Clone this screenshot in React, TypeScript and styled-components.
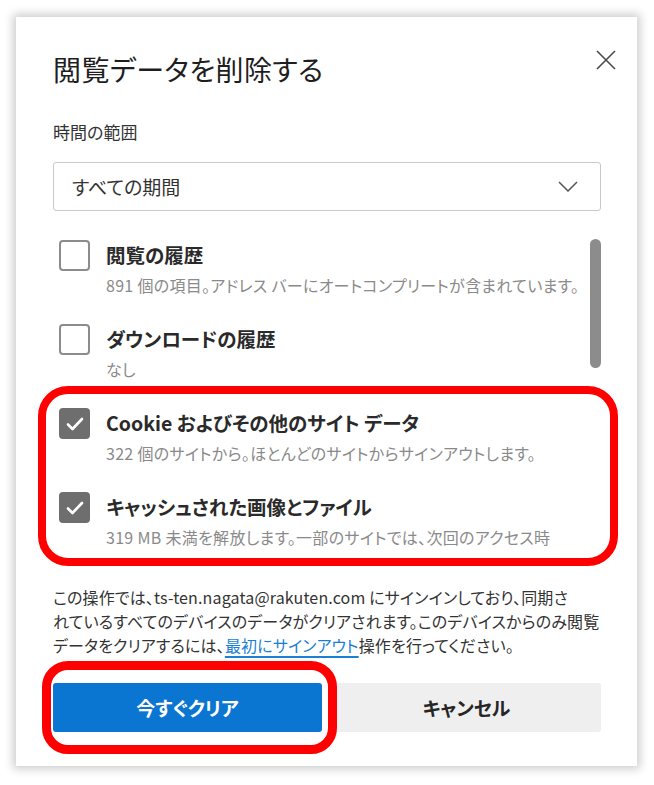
import React from "react";
import styled, { createGlobalStyle } from "styled-components";

const GlobalStyle = createGlobalStyle`
  html, body {
    margin: 0;
    padding: 0;
    background: #ffffff;
  }
  body {
    font-family: "Noto Sans CJK JP", "Noto Sans", sans-serif;
    font-feature-settings: "palt";
    color: #262626;
  }
`;

const Page = styled.div`
  width: 654px;
  height: 785px;
  padding: 17px 17px 19px 16px;
  box-sizing: border-box;
`;

const Card = styled.div`
  position: relative;
  width: 621px;
  height: 749px;
  box-sizing: border-box;
  background: #ffffff;
  box-shadow: 0 0 9px 3px rgba(0, 0, 0, 0.2);
  padding: 32px 36px 0 37px;
  display: flex;
  flex-direction: column;
`;

const Header = styled.div`
  display: flex;
  justify-content: space-between;
  align-items: flex-start;
`;

const Title = styled.h1`
  margin: 0;
  font-size: 28px;
  line-height: 40px;
  font-weight: 400;
  color: #1e1e1e;
  letter-spacing: 0.4px;
`;

const CloseButton = styled.button`
  border: none;
  background: transparent;
  padding: 0;
  width: 24px;
  height: 24px;
  margin: -1px -17px 0 0;
  display: flex;
  align-items: center;
  justify-content: center;
  color: #444;
`;

const FieldLabel = styled.div`
  margin-top: 31px;
  font-size: 17px;
  line-height: 24px;
  color: #333;
`;

const Select = styled.div`
  margin-top: 18px;
  height: 49px;
  box-sizing: border-box;
  border: 1px solid #c9c9c9;
  border-radius: 3px;
  display: flex;
  align-items: center;
  justify-content: space-between;
  padding: 0 22px 0 18px;
  font-size: 19px;
  color: #333;
`;

const ListArea = styled.div`
  position: relative;
  margin-top: 17px;
  height: 328px;
  display: flex;
  gap: 6px;
`;

const Items = styled.div`
  flex: 1;
  overflow: hidden;
  padding: 12px 0 0 6px;
  display: flex;
  flex-direction: column;
  gap: 24px;
`;

const ScrollThumb = styled.div`
  width: 11px;
  height: 129px;
  margin-top: 11px;
  border-radius: 6px;
  background: #8c8c8c;
  flex-shrink: 0;
`;

const Item = styled.div`
  display: flex;
  gap: 16px;
  align-items: flex-start;
`;

const Box = styled.div<{ $checked?: boolean }>`
  width: 31px;
  height: 31px;
  box-sizing: border-box;
  border-radius: 4px;
  flex-shrink: 0;
  border: 2px solid ${(p) => (p.$checked ? "#6e6e6e" : "#8c8c8c")};
  background: ${(p) => (p.$checked ? "#6e6e6e" : "#ffffff")};
  display: flex;
  align-items: center;
  justify-content: center;
`;

const ItemText = styled.div`
  display: flex;
  flex-direction: column;
  min-width: 0;
`;

const ItemTitle = styled.div`
  font-size: 19.5px;
  line-height: 30px;
  font-weight: 700;
  color: #2a2a2a;
  white-space: nowrap;
`;

const ItemSub = styled.div`
  font-size: 16px;
  line-height: 30px;
  letter-spacing: 0.3px;
  color: #8a8a8a;
  white-space: nowrap;
`;

const Highlight = styled.div`
  position: absolute;
  top: 158px;
  left: -15px;
  right: -17px;
  height: 180px;
  box-sizing: border-box;
  border: 8px solid #ff0000;
  border-radius: 30px;
  pointer-events: none;
`;

const Info = styled.p`
  margin: 29px 0 0;
  font-size: 16px;
  line-height: 24px;
  letter-spacing: 0.15px;
  color: #333;
  white-space: nowrap;
`;

const Link = styled.a`
  color: #1a7fd6;
  text-decoration: underline;
  text-underline-offset: 4px;
  text-decoration-thickness: 1.5px;
`;

const Actions = styled.div`
  margin-top: 26px;
  display: flex;
  gap: 10px;
`;

const PrimaryWrap = styled.div`
  position: relative;
  width: 269px;
  &::after {
    content: "";
    position: absolute;
    top: -22px;
    left: -11px;
    right: -15px;
    bottom: -22px;
    border: 9px solid #ff0000;
    border-radius: 26px;
    pointer-events: none;
  }
`;

const Button = styled.button<{ $primary?: boolean }>`
  width: 100%;
  height: 49px;
  border: none;
  border-radius: 3px;
  font-family: inherit;
  font-feature-settings: "palt";
  font-size: 19px;
  font-weight: 700;
  background: ${(p) => (p.$primary ? "#0a76d2" : "#efefef")};
  color: ${(p) => (p.$primary ? "#ffffff" : "#262626")};
`;

const SecondaryWrap = styled.div`
  flex: 1;
`;

const Check = () => (
  <svg width="20" height="20" viewBox="0 0 20 20" fill="none">
    <path d="M3 10.5l4.5 4.5L17 5" stroke="#fff" strokeWidth="2.6" strokeLinecap="round" strokeLinejoin="round" />
  </svg>
);

const items = [
  { title: "閲覧の履歴", sub: "891 個の項目。アドレス バーにオートコンプリートが含まれています。", checked: false },
  { title: "ダウンロードの履歴", sub: "なし", checked: false },
  { title: "Cookie およびその他のサイト データ", sub: "322 個のサイトから。ほとんどのサイトからサインアウトします。", checked: true },
  { title: "キャッシュされた画像とファイル", sub: "319 MB 未満を解放します。一部のサイトでは、次回のアクセス時", checked: true },
];

export default function App() {
  return (
    <>
      <GlobalStyle />
      <Page>
        <Card>
          <Header>
            <Title>閲覧データを削除する</Title>
            <CloseButton aria-label="閉じる">
              <svg width="22" height="22" viewBox="0 0 22 22">
                <path d="M2 2L20 20M20 2L2 20" stroke="#4a4a4a" strokeWidth="1.6" />
              </svg>
            </CloseButton>
          </Header>
          <FieldLabel>時間の範囲</FieldLabel>
          <Select>
            <span>すべての期間</span>
            <svg width="20" height="11" viewBox="0 0 20 11" fill="none">
              <path d="M1 1l9 9 9-9" stroke="#555" strokeWidth="1.5" />
            </svg>
          </Select>
          <ListArea>
            <Items>
              {items.map((it) => (
                <Item key={it.title}>
                  <Box $checked={it.checked}>{it.checked && <Check />}</Box>
                  <ItemText>
                    <ItemTitle>{it.title}</ItemTitle>
                    <ItemSub>{it.sub}</ItemSub>
                  </ItemText>
                </Item>
              ))}
            </Items>
            <ScrollThumb />
            <Highlight />
          </ListArea>
          <Info>
            この操作では、ts-ten.nagata@rakuten.com にサインインしており、同期さ
            <br />
            れているすべてのデバイスのデータがクリアされます。このデバイスからのみ閲覧
            <br />
            データをクリアするには、<Link href="#">最初にサインアウト</Link>操作を行ってください。
          </Info>
          <Actions>
            <PrimaryWrap>
              <Button $primary>今すぐクリア</Button>
            </PrimaryWrap>
            <SecondaryWrap>
              <Button>キャンセル</Button>
            </SecondaryWrap>
          </Actions>
        </Card>
      </Page>
    </>
  );
}
